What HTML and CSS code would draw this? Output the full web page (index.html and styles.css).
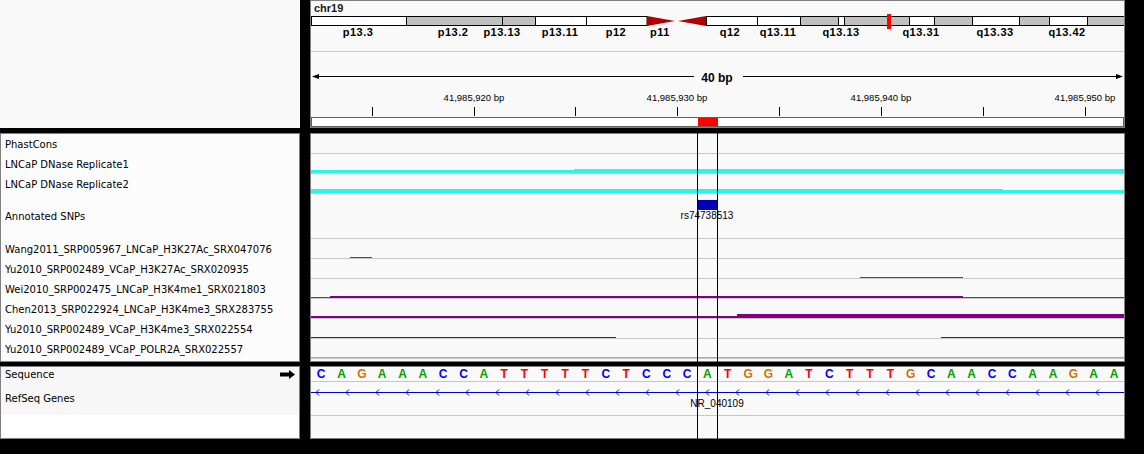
FILE: index.html
```html
<!DOCTYPE html>
<html>
<head>
<meta charset="utf-8">
<title>Genome browser</title>
<link rel="stylesheet" href="styles.css">
</head>
<body>
<div class="app">
  <div class="row row-top">
    <div class="name-panel header-names"></div>
    <div class="data-panel header-data">
      <svg class="header-svg" width="813" height="126" viewBox="311 1 813 126">
        <text class="chr" x="314" y="12">chr19</text>
        <g class="bands">
          <rect x="311.5" y="16.5" width="95" height="9" class="b-white"/>
          <rect x="406.5" y="16.5" width="96" height="9" class="b-grey"/>
          <rect x="502.5" y="16.5" width="33" height="9" class="b-grey"/>
          <rect x="535.5" y="16.5" width="51" height="9" class="b-white"/>
          <rect x="586.5" y="16.5" width="60.5" height="9" class="b-white"/>
          <rect x="706.5" y="16.5" width="51" height="9" class="b-white"/>
          <rect x="757.5" y="16.5" width="43" height="9" class="b-white"/>
          <rect x="800.5" y="16.5" width="38" height="9" class="b-grey"/>
          <rect x="838.5" y="16.5" width="6" height="9" class="b-white"/>
          <rect x="844.5" y="16.5" width="65" height="9" class="b-grey"/>
          <rect x="909.5" y="16.5" width="25" height="9" class="b-white"/>
          <rect x="934.5" y="16.5" width="38" height="9" class="b-grey"/>
          <rect x="972.5" y="16.5" width="47" height="9" class="b-white"/>
          <rect x="1019.5" y="16.5" width="30" height="9" class="b-grey"/>
          <rect x="1049.5" y="16.5" width="38" height="9" class="b-white"/>
          <rect x="1087.5" y="16.5" width="37" height="9" class="b-grey"/>
        </g>
        <polygon class="centro" points="647,16 675,21 647,26"/>
        <polygon class="centro" points="678,21 706,16 706,26"/>
        <rect class="cur-pos" x="887" y="14" width="4" height="15"/>
        <g class="band-labels">
          <text x="358" y="36">p13.3</text>
          <text x="453" y="36">p13.2</text>
          <text x="502" y="36">p13.13</text>
          <text x="560" y="36">p13.11</text>
          <text x="616" y="36">p12</text>
          <text x="660" y="36">p11</text>
          <text x="730" y="36">q12</text>
          <text x="778" y="36">q13.11</text>
          <text x="841" y="36">q13.13</text>
          <text x="921" y="36">q13.31</text>
          <text x="995" y="36">q13.33</text>
          <text x="1067" y="36">q13.42</text>
        </g>
        <line class="sep" x1="311" y1="51.5" x2="1124" y2="51.5"/>
        <line class="span-line" x1="313" y1="76.5" x2="694" y2="76.5"/>
        <line class="span-line" x1="743" y1="76.5" x2="1122" y2="76.5"/>
        <polygon class="span-head" points="312,76.5 319,74 319,79"/>
        <polygon class="span-head" points="1123,76.5 1116,74 1116,79"/>
        <text class="span-text" x="717" y="82">40 bp</text>
        <g class="ruler-labels">
          <text x="474" y="101">41,985,920 bp</text>
          <text x="677" y="101">41,985,930 bp</text>
          <text x="881" y="101">41,985,940 bp</text>
          <text x="1085" y="101">41,985,950 bp</text>
        </g>
        <g class="ticks">
          <line x1="372.5" y1="107" x2="372.5" y2="116"/>
          <line x1="474.5" y1="107" x2="474.5" y2="116"/>
          <line x1="575.5" y1="107" x2="575.5" y2="116"/>
          <line x1="677.5" y1="107" x2="677.5" y2="116"/>
          <line x1="779.5" y1="107" x2="779.5" y2="116"/>
          <line x1="881.5" y1="107" x2="881.5" y2="116"/>
          <line x1="983.5" y1="107" x2="983.5" y2="116"/>
          <line x1="1085.5" y1="107" x2="1085.5" y2="116"/>
        </g>
        <rect class="roi-box" x="311.5" y="117.5" width="812" height="9"/>
        <rect class="roi-fill" x="698" y="118" width="20" height="8"/>
      </svg>
    </div>
  </div>

  <div class="row row-tracks">
    <div class="name-panel track-names">
      <div class="tname h20">PhastCons</div>
      <div class="tname h20">LNCaP DNase Replicate1</div>
      <div class="tname h20">LNCaP DNase Replicate2</div>
      <div class="tname h45">Annotated SNPs</div>
      <div class="tname h20">Wang2011_SRP005967_LNCaP_H3K27Ac_SRX047076</div>
      <div class="tname h20">Yu2010_SRP002489_VCaP_H3K27Ac_SRX020935</div>
      <div class="tname h20">Wei2010_SRP002475_LNCaP_H3K4me1_SRX021803</div>
      <div class="tname h20">Chen2013_SRP022924_LNCaP_H3K4me3_SRX283755</div>
      <div class="tname h20">Yu2010_SRP002489_VCaP_H3K4me3_SRX022554</div>
      <div class="tname h20">Yu2010_SRP002489_VCaP_POLR2A_SRX022557</div>
    </div>
    <div class="data-panel track-data">
      <div class="trow h20"><svg width="813" height="19" viewBox="311 134 813 19"></svg></div>
      <div class="trow h20"><svg width="813" height="19" viewBox="311 154 813 19">
        <rect class="cyan" x="311" y="170" width="263" height="3"/>
        <rect class="cyan" x="574" y="169" width="550" height="4"/>
      </svg></div>
      <div class="trow h20"><svg width="813" height="19" viewBox="311 174 813 19">
        <rect class="cyan" x="311" y="189" width="692" height="4"/>
        <rect class="cyan" x="1003" y="190" width="121" height="3"/>
      </svg></div>
      <div class="trow h45"><svg width="813" height="44" viewBox="311 194 813 44">
        <rect class="snp" x="697" y="200" width="20" height="10"/>
        <text class="feat-label" x="707" y="219">rs74738513</text>
      </svg></div>
      <div class="trow h20"><svg width="813" height="19" viewBox="311 239 813 19">
        <rect class="dark" x="350" y="257" width="22" height="1"/>
      </svg></div>
      <div class="trow h20"><svg width="813" height="19" viewBox="311 259 813 19">
        <rect class="dark" x="860" y="277" width="103" height="1"/>
      </svg></div>
      <div class="trow h20"><svg width="813" height="19" viewBox="311 279 813 19">
        <rect class="dark" x="311" y="297" width="813" height="1"/>
        <rect class="purple" x="330" y="296" width="633" height="2"/>
      </svg></div>
      <div class="trow h20"><svg width="813" height="19" viewBox="311 299 813 19">
        <rect class="purple" x="311" y="316" width="426" height="2"/>
        <rect class="purple" x="737" y="314" width="387" height="4"/>
      </svg></div>
      <div class="trow h20"><svg width="813" height="19" viewBox="311 319 813 19">
        <rect class="purple" x="311" y="337" width="305" height="1"/>
        <rect class="purple" x="941" y="337" width="183" height="1"/>
      </svg></div>
      <div class="trow h20"><svg width="813" height="19" viewBox="311 339 813 19">
        <rect class="green" x="311" y="357" width="813" height="1"/>
      </svg></div>
    </div>
  </div>

  <div class="row row-bottom">
    <div class="name-panel feature-names">
      <div class="fname-area">
        <div class="fname seq-name">
          <span>Sequence</span>
          <svg class="strand-arrow" width="15" height="9" viewBox="0 0 15 9"><polygon points="0,2.5 9,2.5 9,0 15,4.5 9,9 9,6.5 0,6.5"/></svg>
        </div>
        <div class="fname gene-name">RefSeq Genes</div>
      </div>
    </div>
    <div class="data-panel feature-data">
      <div class="seq-row">
        <span class="b c">C</span><span class="b a">A</span><span class="b g">G</span><span class="b a">A</span><span class="b a">A</span><span class="b a">A</span><span class="b c">C</span><span class="b c">C</span><span class="b a">A</span><span class="b t">T</span>
        <span class="b t">T</span><span class="b t">T</span><span class="b t">T</span><span class="b t">T</span><span class="b c">C</span><span class="b t">T</span><span class="b c">C</span><span class="b c">C</span><span class="b c">C</span><span class="b a">A</span>
        <span class="b t">T</span><span class="b g">G</span><span class="b g">G</span><span class="b a">A</span><span class="b t">T</span><span class="b c">C</span><span class="b t">T</span><span class="b t">T</span><span class="b t">T</span><span class="b g">G</span>
        <span class="b c">C</span><span class="b a">A</span><span class="b a">A</span><span class="b c">C</span><span class="b c">C</span><span class="b a">A</span><span class="b a">A</span><span class="b g">G</span><span class="b a">A</span><span class="b a">A</span>
      </div>
      <div class="gene-row">
        <svg width="813" height="33" viewBox="311 382 813 33">
          <line class="gene-line" x1="311" y1="392.5" x2="1124" y2="392.5"/>
          <g class="chevrons">
            <polyline points="319,389.5 316,392.5 319,395.5"/>
            <polyline points="349,389.5 346,392.5 349,395.5"/>
            <polyline points="379,389.5 376,392.5 379,395.5"/>
            <polyline points="409,389.5 406,392.5 409,395.5"/>
            <polyline points="439,389.5 436,392.5 439,395.5"/>
            <polyline points="469,389.5 466,392.5 469,395.5"/>
            <polyline points="499,389.5 496,392.5 499,395.5"/>
            <polyline points="529,389.5 526,392.5 529,395.5"/>
            <polyline points="559,389.5 556,392.5 559,395.5"/>
            <polyline points="589,389.5 586,392.5 589,395.5"/>
            <polyline points="619,389.5 616,392.5 619,395.5"/>
            <polyline points="649,389.5 646,392.5 649,395.5"/>
            <polyline points="679,389.5 676,392.5 679,395.5"/>
            <polyline points="709,389.5 706,392.5 709,395.5"/>
            <polyline points="739,389.5 736,392.5 739,395.5"/>
            <polyline points="769,389.5 766,392.5 769,395.5"/>
            <polyline points="799,389.5 796,392.5 799,395.5"/>
            <polyline points="829,389.5 826,392.5 829,395.5"/>
            <polyline points="859,389.5 856,392.5 859,395.5"/>
            <polyline points="889,389.5 886,392.5 889,395.5"/>
            <polyline points="919,389.5 916,392.5 919,395.5"/>
            <polyline points="949,389.5 946,392.5 949,395.5"/>
            <polyline points="979,389.5 976,392.5 979,395.5"/>
            <polyline points="1009,389.5 1006,392.5 1009,395.5"/>
            <polyline points="1039,389.5 1036,392.5 1039,395.5"/>
            <polyline points="1069,389.5 1066,392.5 1069,395.5"/>
            <polyline points="1099,389.5 1096,392.5 1099,395.5"/>
          </g>
          <text class="feat-label" x="717" y="406.5">NR_040109</text>
        </svg>
      </div>
    </div>
  </div>

  <div class="roi-line roi-left"></div>
  <div class="roi-line roi-right"></div>
</div>
</body>
</html>
```
FILE: styles.css
```css
html, body {
  margin: 0;
  padding: 0;
  background: #000;
}
body {
  width: 1144px;
  height: 454px;
  overflow: hidden;
  font-family: "DejaVu Sans", "Liberation Sans", sans-serif;
  color: #000;
}
.app {
  position: relative;
  display: flex;
  flex-direction: column;
}
.row {
  display: flex;
  gap: 10px;
}
.row-top { height: 128px; margin-bottom: 5px; }
.row-tracks { height: 229px; margin-bottom: 4px; }
.row-bottom { height: 73px; }

.name-panel {
  width: 300px;
  box-sizing: border-box;
  flex: none;
}
.data-panel {
  width: 815px;
  flex: none;
  box-sizing: border-box;
  border: 1px solid #808080;
  background: #f9f9f9;
  overflow: hidden;
}
.data-panel svg { display: block; }

/* header */
.header-names { background: #f9f9f9; }
.header-svg text { font-family: "Liberation Sans", Arial, sans-serif; }
.chr { font-size: 11px; font-weight: bold; fill: #1a1a1a; }
.bands rect { stroke: #000; stroke-width: 1; }
.b-white { fill: #fff; }
.b-grey { fill: #c0c0c0; }
.centro { fill: #b00000; }
.cur-pos { fill: #ff0000; }
.band-labels text {
  font-size: 11px;
  font-weight: bold;
  letter-spacing: 0.5px;
  text-anchor: middle;
  fill: #000;
}
.sep { stroke: #c8c8c8; stroke-width: 1; }
.span-line { stroke: #000; stroke-width: 1; }
.span-head { fill: #000; }
.span-text { font-size: 12px; font-weight: bold; text-anchor: middle; fill: #000; }
.ruler-labels text { font-size: 9.5px; text-anchor: middle; fill: #000; }
.ticks line { stroke: #000; stroke-width: 1; }
.roi-box { fill: #fff; stroke: #606060; stroke-width: 1; }
.roi-fill { fill: #ff0000; }

/* tracks */
.track-names {
  background: #fcfcfc;
  border: 1px solid #808080;
  display: flex;
  flex-direction: column;
}
.tname {
  display: flex;
  align-items: center;
  padding-left: 4px;
  font-size: 10px;
  white-space: nowrap;
  box-sizing: border-box;
}
.tname.h20 { height: 20px; }
.tname.h45 { height: 45px; }
.track-data { display: flex; flex-direction: column; }
.trow {
  box-sizing: border-box;
  border-bottom: 1px solid #c8c8c8;
  flex: none;
}
.trow.h20 { height: 20px; }
.trow.h45 { height: 45px; }
.cyan { fill: #2af4ec; }
.dark { fill: #505050; }
.purple { fill: #800080; }
.green { fill: #66dd66; }
.snp { fill: #0000b4; }
.feat-label {
  font-family: "Liberation Sans", Arial, sans-serif;
  font-size: 10px;
  text-anchor: middle;
  fill: #000;
}

/* bottom */
.feature-names {
  background: #fff;
  border: 1px solid #808080;
}
.fname-area {
  background: #f7f7f7;
  display: flex;
  flex-direction: column;
}
.fname {
  display: flex;
  align-items: center;
  justify-content: space-between;
  padding: 0 4px;
  font-size: 10px;
  box-sizing: border-box;
}
.seq-name { height: 15px; }
.gene-name { height: 33px; }
.strand-arrow { display: block; fill: #000; }

.feature-data { display: flex; flex-direction: column; }
.seq-row {
  height: 15px;
  box-sizing: border-box;
  border-bottom: 1px solid #c8c8c8;
  display: flex;
  align-items: center;
}
.b {
  flex: 1 1 0;
  text-align: center;
  font-family: "Liberation Sans", Arial, sans-serif;
  font-weight: bold;
  font-size: 12px;
  line-height: 14px;
}
.b.c { color: #0000ff; }
.b.a { color: #00a000; }
.b.g { color: #d17105; }
.b.t { color: #ff0000; }
.gene-row {
  height: 34px;
  box-sizing: border-box;
  border-bottom: 1px solid #c8c8c8;
}
.gene-line { stroke: #0000cc; stroke-width: 1; }
.chevrons polyline { fill: none; stroke: #0000cc; stroke-width: 1; }

.roi-line {
  position: absolute;
  top: 133px;
  width: 1px;
  height: 306px;
  background: #000;
}
.roi-left { left: 697px; }
.roi-right { left: 717px; }
```
